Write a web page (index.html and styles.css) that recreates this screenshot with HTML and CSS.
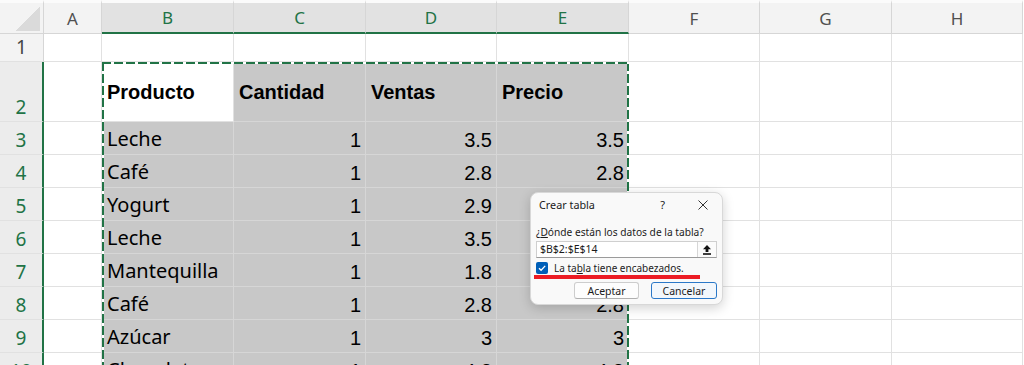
FILE: index.html
```html
<!DOCTYPE html>
<html>
<head>
<meta charset="utf-8">
<title>Crear tabla</title>
<link rel="stylesheet" href="styles.css">
</head>
<body>
<div class="sheet">
  <div class="grid">
    <div class="corner"></div>
    <div class="ch">A</div>
    <div class="ch sel">B</div>
    <div class="ch sel">C</div>
    <div class="ch sel">D</div>
    <div class="ch sel">E</div>
    <div class="ch">F</div>
    <div class="ch">G</div>
    <div class="ch">H</div>

    <div class="rh">1</div>
    <div class="c"></div><div class="c"></div><div class="c"></div><div class="c"></div>
    <div class="c"></div><div class="c"></div><div class="c"></div><div class="c"></div>

    <div class="rh sel">2</div>
    <div class="c"></div>
    <div class="c hd">Producto</div>
    <div class="c hd g">Cantidad</div>
    <div class="c hd g">Ventas</div>
    <div class="c hd g">Precio</div>
    <div class="c"></div><div class="c"></div><div class="c"></div>

    <div class="rh sel">3</div>
    <div class="c"></div><div class="c g tx">Leche</div><div class="c g n">1</div><div class="c g n">3.5</div><div class="c g n">3.5</div>
    <div class="c"></div><div class="c"></div><div class="c"></div>

    <div class="rh sel">4</div>
    <div class="c"></div><div class="c g tx">Café</div><div class="c g n">1</div><div class="c g n">2.8</div><div class="c g n">2.8</div>
    <div class="c"></div><div class="c"></div><div class="c"></div>

    <div class="rh sel">5</div>
    <div class="c"></div><div class="c g tx">Yogurt</div><div class="c g n">1</div><div class="c g n">2.9</div><div class="c g n">2.9</div>
    <div class="c"></div><div class="c"></div><div class="c"></div>

    <div class="rh sel">6</div>
    <div class="c"></div><div class="c g tx">Leche</div><div class="c g n">1</div><div class="c g n">3.5</div><div class="c g n">3.5</div>
    <div class="c"></div><div class="c"></div><div class="c"></div>

    <div class="rh sel">7</div>
    <div class="c"></div><div class="c g tx">Mantequilla</div><div class="c g n">1</div><div class="c g n">1.8</div><div class="c g n">1.8</div>
    <div class="c"></div><div class="c"></div><div class="c"></div>

    <div class="rh sel">8</div>
    <div class="c"></div><div class="c g tx">Café</div><div class="c g n">1</div><div class="c g n">2.8</div><div class="c g n">2.8</div>
    <div class="c"></div><div class="c"></div><div class="c"></div>

    <div class="rh sel">9</div>
    <div class="c"></div><div class="c g tx">Azúcar</div><div class="c g n">1</div><div class="c g n">3</div><div class="c g n">3</div>
    <div class="c"></div><div class="c"></div><div class="c"></div>

    <div class="rh sel">10</div>
    <div class="c"></div><div class="c g tx">Chocolate</div><div class="c g n">1</div><div class="c g n">4.2</div><div class="c g n">4.2</div>
    <div class="c"></div><div class="c"></div><div class="c"></div>
  </div>

  <!-- copy marquee around B2:E14 -->
  <div class="ants"></div>

  <div class="dialog">
    <div class="dlg-head">
      <span class="dlg-title">Crear tabla</span>
      <span class="dlg-help">?</span>
      <svg class="dlg-close" width="10" height="10" viewBox="0 0 10 10"><path d="M0.5 0.5L9.5 9.5M9.5 0.5L0.5 9.5" stroke="#333" stroke-width="1" fill="none"/></svg>
    </div>
    <div class="dlg-label">¿<u>D</u>ónde están los datos de la tabla?</div>
    <div class="dlg-input">
      <span class="dlg-ref">$B$2:$E$14</span>
      <span class="dlg-pick"><svg width="10" height="11" viewBox="0 0 10 11"><path d="M5 1L9 5.2H6.4V8H3.6V5.2H1Z" fill="#111"/><rect x="1" y="9.2" width="8" height="1.6" fill="#111"/></svg></span>
    </div>
    <div class="dlg-check">
      <span class="box"><svg width="12" height="12" viewBox="0 0 12 12"><path d="M3 6.2L5.1 8.3L9.2 3.9" stroke="#fff" stroke-width="1.3" fill="none"/></svg></span>
      <span>La ta<u>b</u>la tiene encabezados.</span>
    </div>
    <div class="redline"></div>
    <div class="dlg-buttons">
      <button class="btn">Aceptar</button>
      <button class="btn def">Cancelar</button>
    </div>
  </div>
</div>
</body>
</html>
```

FILE: styles.css
```css
body {
	margin:0;
	background:#ffffff;
	overflow:hidden;
}
.sheet {
	position:relative;
	height:365px;
	overflow:hidden;
}
.grid {
	display:grid;
	grid-template-columns:44px 58px 132px 132px 131px 132px 131px 132px 131px;
	grid-template-rows:34px 28px 60px repeat(8, 33px);
}
.grid > div {
	box-sizing:border-box;
	border-right:1px solid #e1e1e1;
	border-bottom:1px solid #e1e1e1;
	white-space:nowrap;
	overflow:hidden;
}

/* headers */
.corner {
	background:#f3f3f3 linear-gradient(135deg, transparent 50%, #dadada 50%) no-repeat right 3px bottom 2px / 24px 25px;
	border-top:3px solid #fbfbfb;
	border-right-color:#d6d6d6 !important;
	border-bottom-color:#d6d6d6 !important;
}
.ch {
	display:flex;
	align-items:center;
	justify-content:center;
	border-top:3px solid #fbfbfb;
	background:#f3f3f3;
	border-right-color:#d6d6d6 !important;
	border-bottom-color:#d6d6d6 !important;
	color:#505050;
	font:17px/22px "Noto Sans", sans-serif;
	padding-top:1px;
}
.ch.sel {
	background:#e2e2e2;
	color:#217346;
	border-bottom:2px solid #217346 !important;
}
.rh {
	display:flex;
	align-items:flex-end;
	justify-content:center;
	background:#f3f3f3;
	border-right-color:#d6d6d6 !important;
	color:#444444;
	font:19px/24px "Noto Sans", sans-serif;
	padding-bottom:2px;
}
.rh.sel {
	background:#ececec;
	color:#217346;
	border-right:2px solid #217346 !important;
}

/* cells */
.c {
	display:flex;
	align-items:flex-end;
	color:#000000;
	padding:0 4px 2px 5px;
}
.c.g {
	background:#c8c8c8;
	border-color:#d6d6d6;
}
.c.tx {
	font:20px/26px "Noto Sans", sans-serif;
}
.c.n {
	justify-content:flex-end;
	font:20px/26px "Liberation Sans", Arial, sans-serif;
	padding-bottom:1px;
}
.c.hd {
	align-items:center;
	padding-top:3px;
	font:bold 20px/26px "Liberation Sans", Arial, sans-serif;
}

.ants {
	position:absolute;
	left:102px;
	top:62px;
	width:527px;
	height:330px;
	background:
		repeating-linear-gradient(90deg, #217346 0 9px, #ffffff 9px 12px) left top / 100% 2px no-repeat,
		repeating-linear-gradient(180deg, #217346 0 9px, #ffffff 9px 12px) left top / 2px 100% no-repeat,
		repeating-linear-gradient(180deg, #217346 0 9px, #ffffff 9px 12px) right top / 2px 100% no-repeat;
}

/* dialog */
.dialog {
	position:absolute;
	left:530px;
	top:192px;
	width:193px;
	box-sizing:border-box;
	padding:3px 5px 5px 5px;
	background:#f9f9f9;
	border:1px solid #d8d8d8;
	border-radius:8px;
	box-shadow:0 3px 12px rgba(0,0,0,0.18);
	font:10.5px/14px "Noto Sans", sans-serif;
	color:#1b1b1b;
	display:flex;
	flex-direction:column;
}
.dlg-head {
	display:flex;
	align-items:center;
	height:18px;
}
.dlg-title {
	margin-left:3px;
	font-size:10.8px;
}
.dlg-help {
	margin-left:auto;
	margin-right:33px;
	font-size:11px;
}
.dlg-close {
	margin-right:9px;
}
.dlg-label {
	margin-top:11px;
	height:14px;
	font-size:10.2px;
}
.dlg-input {
	margin-top:2px;
	height:17px;
	box-sizing:border-box;
	display:flex;
	align-items:stretch;
	background:#ffffff;
	border:1px solid #cfcfcf;
	border-bottom-color:#9a9a9a;
}
.dlg-ref {
	flex:1;
	padding-left:3px;
	line-height:15px;
}
.dlg-pick {
	width:18px;
	display:flex;
	align-items:center;
	justify-content:center;
	border-left:1px solid #d6d6d6;
	background:#fbfbfb;
}
.dlg-check {
	margin-top:3px;
	height:14px;
	display:flex;
	align-items:center;
	gap:6px;
	font-size:10px;
}
.box {
	width:12px;
	height:12px;
	border-radius:2px;
	background:#005fb8;
	display:flex;
}
.redline {
	margin-left:-2px;
	width:166px;
	height:4px;
	background:#ec1c24;
}
.dlg-buttons {
	margin-top:3px;
	display:flex;
	justify-content:flex-end;
	gap:12px;
}
.btn {
	height:17px;
	box-sizing:border-box;
	padding:0;
	font:10.5px/14px "Noto Sans", sans-serif;
	color:#1b1b1b;
	background:#fdfdfd;
	border:1px solid #cdcdcd;
	border-bottom-color:#b0b0b0;
	border-radius:3px;
}
.btn:first-child { width:65px; }
.btn.def {
	width:66px;
	background:#f2f7fc;
	border:1px solid #2a78c8;
}
```
